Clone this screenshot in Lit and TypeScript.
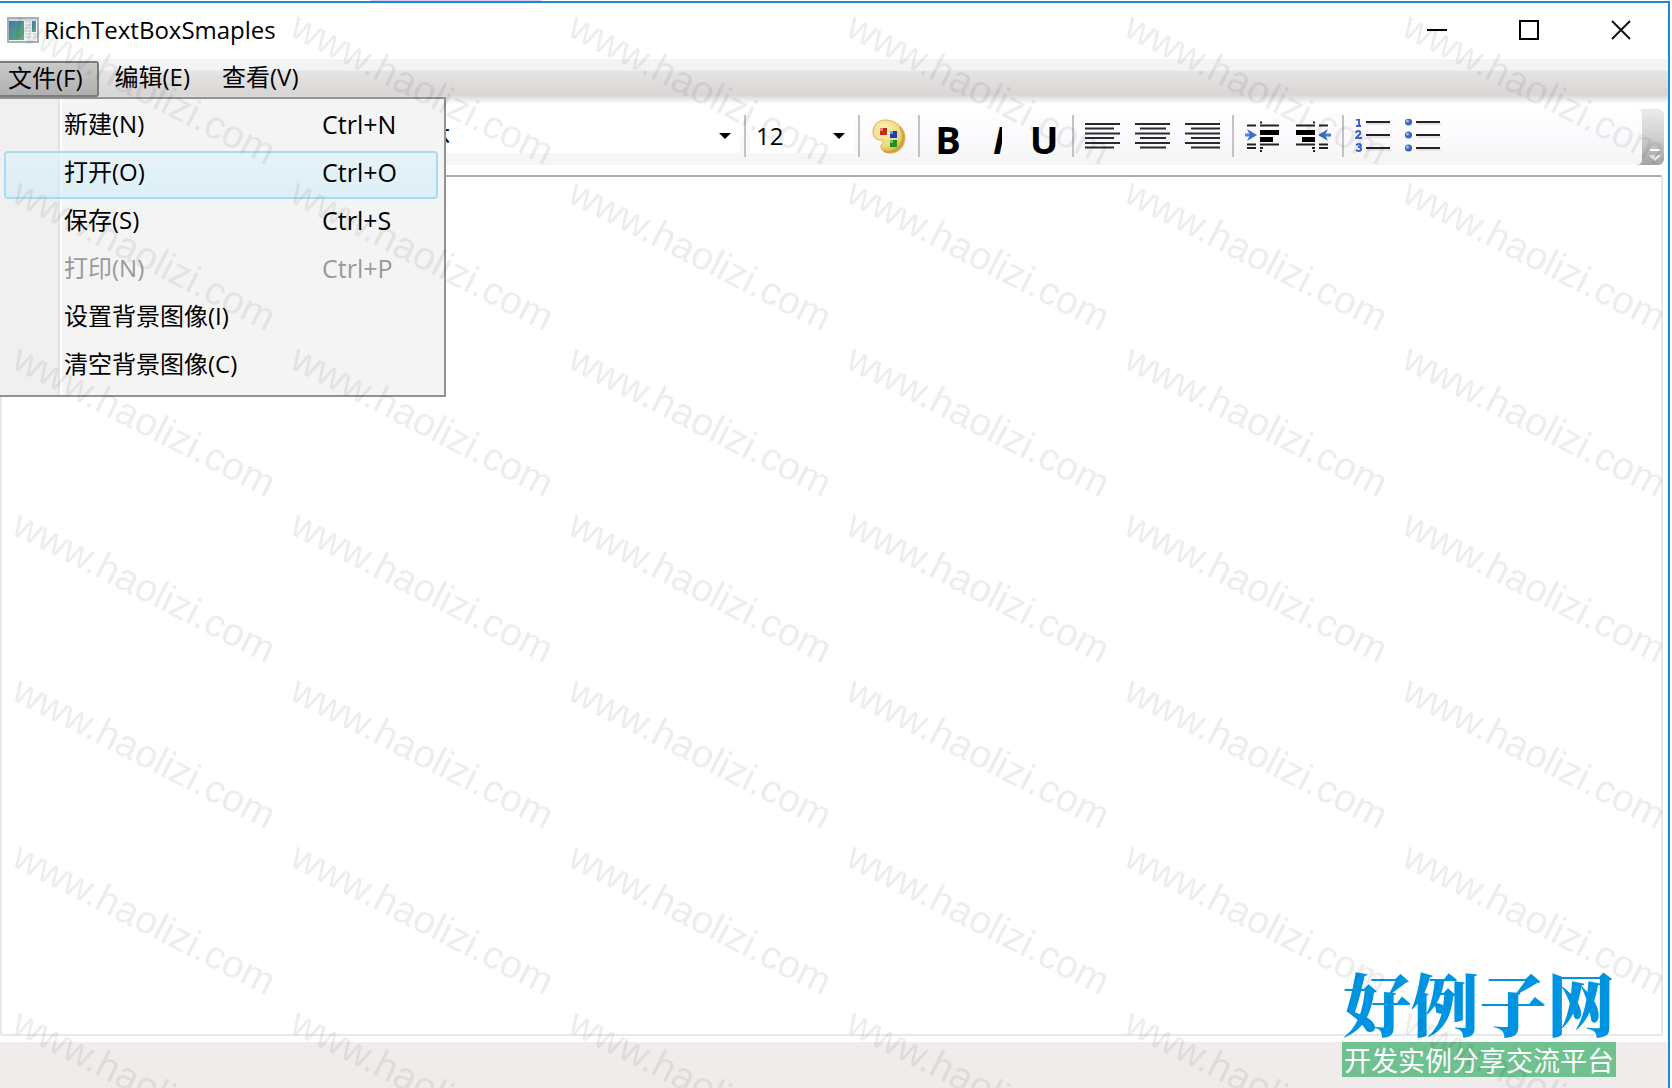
import { LitElement, html, css, svg, nothing } from "lit";
import { customElement, state } from "lit/decorators.js";
import { classMap } from "lit/directives/class-map.js";

interface MenuEntry {
  label: string;
  keys?: string;
  disabled?: boolean;
}

const FILE_MENU: MenuEntry[] = [
  { label: "新建(N)", keys: "Ctrl+N" },
  { label: "打开(O)", keys: "Ctrl+O" },
  { label: "保存(S)", keys: "Ctrl+S" },
  { label: "打印(N)", keys: "Ctrl+P", disabled: true },
  { label: "设置背景图像(I)" },
  { label: "清空背景图像(C)" },
];

const appIcon = html`<svg width="32" height="26" viewBox="0 0 32 26" aria-hidden="true">
  <defs>
    <linearGradient id="pane" x1="0" y1="0" x2="1" y2="1">
      <stop offset="0" stop-color="#3f78b0" /><stop offset="1" stop-color="#62b56a" />
    </linearGradient>
  </defs>
  <rect x="1" y="1" width="30" height="24" fill="#f2f3f5" stroke="#a9afb6" stroke-width="2" />
  <rect x="2" y="2" width="28" height="2" fill="#d4d8de" />
  <rect x="2" y="4" width="15" height="19" fill="url(#pane)" />
  <path d="M18 5h6M18 8h6M18 11h6M18 14h6M18 17h6M18 20h6" stroke="#c3c6cb" stroke-width="1" />
  <rect x="25" y="4" width="4" height="11" fill="url(#pane)" />
  <path d="M26 17h3M26 20h3" stroke="#c6c8cc" stroke-width="1" />
</svg>`;

const paletteIcon = html`<svg width="34" height="36" viewBox="0 0 34 36" aria-hidden="true">
  <defs>
    <radialGradient id="wood" cx="0.35" cy="0.3" r="0.8">
      <stop offset="0" stop-color="#fdf3bd" /><stop offset="0.6" stop-color="#f0d878" /><stop offset="1" stop-color="#d2a23c" />
    </radialGradient>
  </defs>
  <path d="M14 1C6 1 1 6 1 13c0 5 3 8 7 8 3 0 4 1 3 3-2 1-2 3-2 4 0 4 5 6 10 6 8 0 14-7 14-16C33 10 24 1 14 1z" fill="url(#wood)" stroke="#d8b456" stroke-width="1" />
  <path d="M28 8c5 8 4 17-3 22-4 3-9 4-13 2" fill="none" stroke="#b5852a" stroke-width="2" opacity=".5" />
  <rect x="8" y="9" width="7" height="7" fill="#c8281c" /><rect x="8" y="9" width="3" height="3" fill="#e8806c" />
  <rect x="18" y="12" width="7" height="7" fill="#1c3fb0" /><rect x="18" y="12" width="3" height="3" fill="#7a9ae0" />
  <rect x="18" y="21" width="7" height="7" fill="#1f8f1c" /><rect x="18" y="21" width="3" height="3" fill="#6cc860" />
</svg>`;

const alignIcon = (start: number, length: number) => html`<svg width="36" height="28" viewBox="2 1 36 28" aria-hidden="true">
  <path d="M1 2h35M1 11.500h35M1 21h35" transform="translate(1 0)" stroke="#2a2a2c" stroke-width="2" />
  <path d="M${start} 6.500h${length}M${start} 16h${length}M${start} 25.500h${length}" transform="translate(1 0)" stroke="#2a2a2c" stroke-width="2" />
</svg>`;

const indentShape = svg`
  <path d="M3 5.500h9M3 24.500h9M3 28h9" stroke="#222" stroke-width="2" />
  <path d="M16 5.500h19M16 24.500h19" stroke="#222" stroke-width="2" />
  <path d="M16 28h3M16 2.500h2M16 31h2" stroke="#222" stroke-width="2" />
  <rect x="16" y="10" width="19" height="5" fill="#000" />
  <rect x="16" y="17" width="13" height="5" fill="#000" />
  <path d="M0 15h8" stroke="#4b86d2" stroke-width="3" />
  <path d="M3 9l10 6-10 6 3-6z" fill="#3873c6" />`;

const indentIcon = html`<svg width="36" height="34" viewBox="1 0 36 34" aria-hidden="true">${indentShape}</svg>`;

const outdentIcon = html`<svg width="36" height="34" viewBox="0 0 36 34" aria-hidden="true">
  <g transform="matrix(-1 0 0 1 36 0)">${indentShape}</g>
</svg>`;

const lines = svg`<path d="M12 5h24M12 18h24M12 31h24" stroke="#222" stroke-width="2" />
  <path d="M13 7h24M13 20h24M13 33h24" stroke="#d0d0d0" stroke-width="1" />`;

const numberedIcon = html`<svg width="36" height="36" viewBox="1 2 36 36" aria-hidden="true">
  ${lines}
  <g fill="none" stroke="#4263d2" stroke-width="2">
    <path d="M2 3l3-1v7M2 9h5" />
    <path d="M2 16q0-2 2-2 3 0 2 3l-4 4h6" />
    <path d="M2 28q4-2 5 0 0 2-3 2 4 0 3 3-2 2-5 0" />
  </g>
</svg>`;

const bulletIcon = html`<svg width="36" height="36" viewBox="1 2 36 36" aria-hidden="true">
  ${lines}
  ${[5, 18, 31].map(
    (y) => svg`<circle cx="4.500" cy=${y} r="3.500" fill="#3467b8" /><circle cx="3.500" cy=${y - 1} r="1.500" fill="#9cc0ee" />`
  )}
</svg>`;

@customElement("page-watermark")
class PageWatermark extends LitElement {
  static styles = css`
    :host { display: block; pointer-events: none; }
    .tiles { display: block; width: 100%; height: 100%; }
    .mark { font: 39px "Liberation Sans", Arial, sans-serif; fill: #000; fill-opacity: 0.07; }
  `;
  render() {
    return html`<svg class="tiles" aria-hidden="true">
      <defs>
        <pattern id="tile" width="278" height="166" patternUnits="userSpaceOnUse">
          <text class="mark" transform="translate(10 35) rotate(27)">www.haolizi.com</text>
        </pattern>
      </defs>
      <rect width="100%" height="100%" fill="url(#tile)" />
    </svg>`;
  }
}

@customElement("format-bar")
class FormatBar extends LitElement {
  static styles = css`
    :host { display: block; }
    .bar {
      display: flex; align-items: stretch; height: 56px; box-sizing: border-box; padding-left: 396px;
      background: linear-gradient(#ffffff, #fbf9fc 50%, #f5f5f5);
      border-radius: 0 6px 6px 0;
    }
    .combo { position: relative; height: 40px; margin-top: 4px; background: #fff; }
    .font { width: 344px; }
    .size { width: 104px; }
    select {
      appearance: none; border: 0; margin: 0; padding: 4px 0 0 6px; width: 100%; height: 100%;
      background: transparent; color: #000; font: 24px "Open Sans", "Noto Sans CJK SC", sans-serif;
    }
    .arrow { position: absolute; right: 9px; top: 20px; pointer-events: none; }
    .sep { flex: none; width: 2px; height: 42px; margin: 6px 4px 0; background: #c4c2c5; }
    button {
      flex: none; width: 50px; border: 0; padding: 0; margin: 0; background: none; color: #000;
      display: flex; align-items: center; justify-content: center;
    }
    .letter { width: 48px; font: bold 38px/52px "Open Sans", sans-serif; padding-top: 4px; }
    .slant { display: block; box-sizing: border-box; width: 12px; padding-left: 3px; overflow: hidden; font-style: italic; }
    .lid { flex: none; margin-left: auto; display: flex; background: linear-gradient(#ebebeb, #d0d0d0 50%, #a2a2a2); border-radius: 0 6px 6px 0; }
    .edge { width: 5px; background: linear-gradient(#ffffff, #fbf9fc 50%, #f5f5f5); border-radius: 0 6px 6px 0; }
    .more { width: 22px; align-items: flex-end; padding: 0 0 4px 4px; box-sizing: border-box; }
  `;

  private arrow = html`<svg class="arrow" width="12" height="6" viewBox="0 0 12 6" aria-hidden="true"><path d="M0 0h12L6 6z" /></svg>`;

  render() {
    const sep = html`<span class="sep"></span>`;
    return html`<div class="bar" role="toolbar" aria-label="格式">
      <div class="combo font"><select aria-label="字体"><option>宋体</option></select>${this.arrow}</div>
      ${sep}
      <div class="combo size"><select aria-label="字号"><option>12</option></select>${this.arrow}</div>
      ${sep}
      <button aria-label="颜色">${paletteIcon}</button>
      ${sep}
      <button class="letter" aria-label="加粗">B</button>
      <button class="letter" aria-label="斜体"><span class="slant">I</span></button>
      <button class="letter" aria-label="下划线">U</button>
      ${sep}
      <button aria-label="左对齐">${alignIcon(1, 29)}</button>
      <button aria-label="居中">${alignIcon(6, 26)}</button>
      <button aria-label="右对齐">${alignIcon(7, 29)}</button>
      ${sep}
      <button aria-label="增加缩进">${indentIcon}</button>
      <button aria-label="减少缩进">${outdentIcon}</button>
      ${sep}
      <button aria-label="编号">${numberedIcon}</button>
      <button aria-label="项目符号">${bulletIcon}</button>
      <div class="lid"><span class="edge"></span>
        <button class="more" aria-label="更多"><svg width="14" height="12" viewBox="0 0 14 12" aria-hidden="true">
          <path d="M2 1h10" stroke="#fff" stroke-width="2" /><path d="M1 6l6 6 6-6-3 0-3 3z" fill="#fff" /><path d="M1 6l6 6V6z" fill="#ddd" /></svg></button>
      </div>
    </div>`;
  }
}

@customElement("app-root")
class AppRoot extends LitElement {
  static styles = css`
    :host {
      display: block; height: 100vh; box-sizing: border-box; padding: 1px 2px 0 0;
      position: relative; overflow: hidden; color: #000;
      background: linear-gradient(#dccbf2, #dccbf2) 371px 0 / 170px 1px no-repeat #fff;
      font: 24px/32px "Open Sans", "Noto Sans CJK SC", sans-serif;
    }
    .window {
      height: 100%; box-sizing: border-box; display: flex; flex-direction: column;
      border-top: 2px solid #2086d2; border-right: 2px solid #2086d2; background: #fff;
    }
    .title { display: flex; align-items: center; height: 56px; box-sizing: border-box; padding: 0 1px 2px 7px; }
    .name { font: inherit; margin: 0 auto 0 5px; }
    button { font: inherit; color: inherit; border: 0; margin: 0; background: none; }
    .ctl { width: 92px; height: 54px; padding: 0; display: flex; align-items: center; justify-content: center; }
    .menubar {
      position: relative; display: flex; height: 50px; box-sizing: border-box; padding-top: 2px;
      background: linear-gradient(#f4f4f4 0, #f4f4f4 11px, #e7e4e4 12px, #d8d6d5 36px, #ffffff 45px);
    }
    .top { height: 36px; padding: 0 16px; line-height: 30px; padding-bottom: 4px; }
    .open {
      padding: 0 14px 2px 8px; border: 2px solid #7c7c7c; border-left: 0; border-radius: 0 3px 3px 0;
      background: linear-gradient(#c9c9c9, #b0b0b0);
    }
    .drop {
      position: absolute; z-index: 2; left: 0; top: 38px; width: 446px; box-sizing: border-box;
      padding: 4px 6px 4px 4px; border: 2px solid #929292; border-left: 0;
      background: linear-gradient(90deg, #f0f0f0 58px, #e2e2e2 58px, #e2e2e2 60px, #fff 60px, #fff 62px, #f4f4f4 62px);
    }
    .item {
      display: flex; align-items: center; width: 100%; height: 48px; box-sizing: border-box;
      padding: 0 0 6px 58px; border: 2px solid transparent; border-radius: 4px; text-align: left;
    }
    .label { width: 258px; }
    .keys { font-size: 25px; }
    .hot { border-color: #aadcf1; background: linear-gradient(rgba(222, 241, 250, 0.6), rgba(205, 236, 249, 0.6)); }
    .item:disabled { color: #9a9a9a; }
    .tools { margin: 0 4px 10px 0; }
    .page {
      flex: 1; min-height: 0; margin: 0 5px 6px 0; box-sizing: border-box; resize: none; outline: 0; padding: 8px;
      border: 2px solid #e3e9ef; border-top-color: #abadb3; border-radius: 3px; background: #fff; font: inherit;
    }
    .status { height: 46px; background: #f0eceb; }
    .brand { position: absolute; right: 56px; bottom: 11px; width: 274px; z-index: 3; text-align: center; }
    .brand-name { display: block; color: #0094e0; font: 900 68px/68px "Noto Serif CJK SC", "Noto Sans CJK SC", serif; white-space: nowrap; }
    .brand-line { display: block; margin-top: 6px; background: #6fc18f; color: #fff; font: 27px/35px "Noto Sans CJK SC", sans-serif; white-space: nowrap; }
    .watermark { position: absolute; inset: 0; z-index: 4; }
  `;

  @state() private fileOpen = true;
  @state() private active = 1;

  render() {
    return html`<div class="window">
        <header class="title">
          ${appIcon}
          <h1 class="name">RichTextBoxSmaples</h1>
          <button class="ctl" aria-label="最小化"><svg width="20" height="20"><path d="M0 10h20" stroke="#000" stroke-width="2" /></svg></button>
          <button class="ctl" aria-label="最大化"><svg width="20" height="20"><rect x="1" y="1" width="18" height="18" fill="none" stroke="#000" stroke-width="2" /></svg></button>
          <button class="ctl" aria-label="关闭"><svg width="20" height="20"><path d="M1 1l18 18M19 1L1 19" stroke="#111" stroke-width="2" /></svg></button>
        </header>
        <nav class="menubar">
          <button class=${classMap({ top: true, open: this.fileOpen })} aria-haspopup="menu" @click=${() => (this.fileOpen = !this.fileOpen)}>文件(F)</button>
          <button class="top">编辑(E)</button>
          <button class="top">查看(V)</button>
          ${this.fileOpen
            ? html`<div class="drop" role="menu">
                ${FILE_MENU.map(
                  (m, i) => html`<button
                    role="menuitem"
                    class=${classMap({ item: true, hot: i === this.active })}
                    ?disabled=${!!m.disabled}
                    @mouseenter=${() => (this.active = i)}
                  ><span class="label">${m.label}</span>${m.keys ? html`<span class="keys">${m.keys}</span>` : nothing}</button>`
                )}
              </div>`
            : nothing}
        </nav>
        <format-bar class="tools"></format-bar>
        <textarea class="page" aria-label="文档"></textarea>
        <footer class="status"></footer>
      </div>
      <div class="brand"><span class="brand-name">好例子网</span><span class="brand-line">开发实例分享交流平台</span></div>
      <page-watermark class="watermark"></page-watermark>`;
  }
}
